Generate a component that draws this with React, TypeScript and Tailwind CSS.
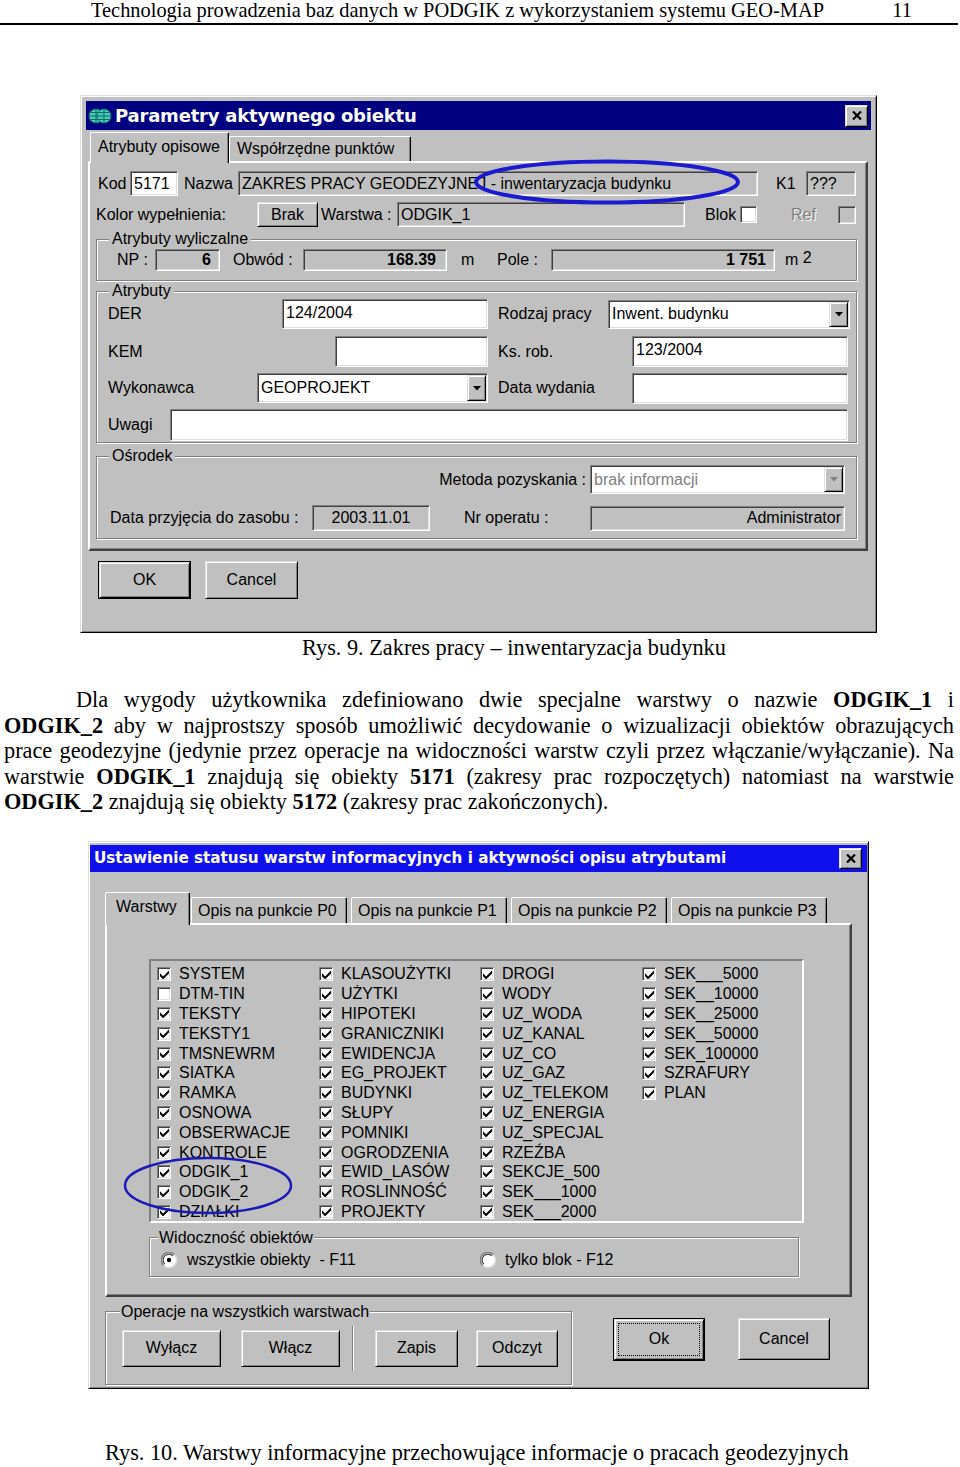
import React from "react";

const RAISED =
  "border border-t-[#dfdfdf] border-l-[#dfdfdf] border-r-black border-b-black shadow-[inset_1px_1px_0_white,inset_-1px_-1px_0_#808080]";
const SUNKEN =
  "border border-t-[#808080] border-l-[#808080] border-r-white border-b-white shadow-[inset_1px_1px_0_#404040,inset_-1px_-1px_0_#dfdfdf]";
const GROUP =
  "border border-[#808080] shadow-[inset_1px_1px_0_white,1px_1px_0_white]";

function Field({
  className = "",
  white = false,
  children,
}: {
  className?: string;
  white?: boolean;
  children?: React.ReactNode;
}) {
  return (
    <div
      className={`flex items-center px-[3px] overflow-hidden whitespace-nowrap ${SUNKEN} ${
        white ? "bg-white" : "bg-[#c0c0c0]"
      } ${className}`}
    >
      {children}
    </div>
  );
}

function Arrow({ gray = false }: { gray?: boolean }) {
  return (
    <svg width="8" height="5" viewBox="0 0 8 5">
      <path d="M0 0H8L4 4.5Z" fill={gray ? "#808080" : "black"} />
    </svg>
  );
}

function Combo({
  className = "",
  children,
  gray = false,
}: {
  className?: string;
  children?: React.ReactNode;
  gray?: boolean;
}) {
  return (
    <div className={`flex items-stretch bg-white ${SUNKEN} ${className}`}>
      <span
        className={`flex-1 flex items-center pl-[3px] whitespace-nowrap overflow-hidden ${
          gray ? "text-[#808080]" : ""
        }`}
      >
        {children}
      </span>
      <span
        className={`w-[19px] m-[1px] flex items-center justify-center bg-[#c0c0c0] ${RAISED}`}
      >
        <Arrow gray={gray} />
      </span>
    </div>
  );
}

function Btn({
  className = "",
  children,
  def = false,
  focus = false,
}: {
  className?: string;
  children?: React.ReactNode;
  def?: boolean;
  focus?: boolean;
}) {
  return (
    <div
      className={`flex bg-[#c0c0c0] ${def ? "border border-black" : ""} ${className}`}
    >
      <div
        className={`flex-1 flex items-stretch justify-center p-[3px] ${RAISED}`}
      >
        <div
          className={`flex-1 flex items-center justify-center ${
            focus ? "border border-dotted border-black" : ""
          }`}
        >
          {children}
        </div>
      </div>
    </div>
  );
}

function CheckMark() {
  return (
    <svg width="9" height="9" viewBox="0 0 7 7">
      <path d="M0 2.6L2.4 5L7 0.4V2.8L2.4 7.3L0 4.9Z" fill="black" />
    </svg>
  );
}

function CheckBox({
  checked = true,
  className = "",
  gray = false,
}: {
  checked?: boolean;
  className?: string;
  gray?: boolean;
}) {
  return (
    <span
      className={`flex items-center justify-center shrink-0 ${
        gray ? "bg-[#c0c0c0]" : "bg-white"
      } ${SUNKEN} ${className}`}
    >
      {checked && <CheckMark />}
    </span>
  );
}

function Radio({ on = false }: { on?: boolean }) {
  return (
    <svg width="16" height="16" viewBox="0 0 16 16" className="shrink-0">
      <circle cx="8" cy="8" r="7" fill="white" />
      <path d="M2.5 13.2A7 7 0 0 1 13.2 2.5" stroke="#808080" strokeWidth="1.5" fill="none" />
      <path d="M3.8 12A5.5 5.5 0 0 1 12 3.8" stroke="#404040" strokeWidth="1.2" fill="none" />
      <path d="M13.5 2.9A7 7 0 0 1 2.9 13.5" stroke="#dfdfdf" strokeWidth="1.2" fill="none" />
      {on && <circle cx="8" cy="8" r="2.2" fill="black" />}
    </svg>
  );
}

function CloseBtn({ className = "" }: { className?: string }) {
  return (
    <div
      className={`flex items-center justify-center bg-[#c0c0c0] ${RAISED} ${className}`}
    >
      <svg width="10" height="9" viewBox="0 0 10 9">
        <path d="M1 0.5L9 8.5M9 0.5L1 8.5" stroke="black" strokeWidth="2.2" />
      </svg>
    </div>
  );
}

function Globe() {
  return (
    <svg width="24" height="18" viewBox="0 0 24 18" className="shrink-0">
      <g fill="#48c8b8" stroke="#0b6f66" strokeWidth="1">
        <circle cx="8" cy="9" r="7" />
        <circle cx="16" cy="9" r="7" />
      </g>
      <path
        d="M1 9H23M8 2V16M16 2V16M2.5 5.5H21.5M2.5 12.5H21.5"
        stroke="#0b6f66"
        strokeWidth="1"
        fill="none"
      />
    </svg>
  );
}

const col1: [string, boolean][] = [
  ["SYSTEM", true],
  ["DTM-TIN", false],
  ["TEKSTY", true],
  ["TEKSTY1", true],
  ["TMSNEWRM", true],
  ["SIATKA", true],
  ["RAMKA", true],
  ["OSNOWA", true],
  ["OBSERWACJE", true],
  ["KONTROLE", true],
  ["ODGIK_1", true],
  ["ODGIK_2", true],
  ["DZIAŁKI", true],
];
const others = [
  "KLASOUŻYTKI",
  "UŻYTKI",
  "HIPOTEKI",
  "GRANICZNIKI",
  "EWIDENCJA",
  "EG_PROJEKT",
  "BUDYNKI",
  "SŁUPY",
  "POMNIKI",
  "OGRODZENIA",
  "EWID_LASÓW",
  "ROSLINNOŚĆ",
  "PROJEKTY",
  "DROGI",
  "WODY",
  "UZ_WODA",
  "UZ_KANAL",
  "UZ_CO",
  "UZ_GAZ",
  "UZ_TELEKOM",
  "UZ_ENERGIA",
  "UZ_SPECJAL",
  "RZEŹBA",
  "SEKCJE_500",
  "SEK___1000",
  "SEK___2000",
  "SEK___5000",
  "SEK__10000",
  "SEK__25000",
  "SEK__50000",
  "SEK_100000",
  "SZRAFURY",
  "PLAN",
];
const layers: [string, boolean][] = [
  ...col1,
  ...others.map((n) => [n, true] as [string, boolean]),
];

function Dialog1() {
  return (
    <div
      className={`relative ml-[80px] mt-[70px] w-[797px] h-[538px] bg-[#c0c0c0] p-[5px] ${RAISED} font-['Liberation_Sans',Arial,sans-serif] text-[16px] leading-[18px] text-black`}
    >
      {/* title bar */}
      <div className="flex items-center h-[29px] bg-[#000080] pl-[2px] pr-[3px]">
        <Globe />
        <span className="ml-[3px] font-['DejaVu_Sans',sans-serif] font-bold text-[18px] text-white tracking-[-0.2px]">
          Parametry aktywnego obiektu
        </span>
        <CloseBtn className="ml-auto w-[23px] h-[22px]" />
      </div>

      {/* tabs */}
      <div className="flex items-end h-[29px] mt-[2px] pl-[4px]">
        <div className="relative z-10 -mb-[2px] h-[31px] w-[139px] bg-[#c0c0c0] border-t border-l border-r border-t-white border-l-white border-r-black shadow-[inset_-1px_0_0_#808080] rounded-t-[2px] flex items-center pl-[7px] pb-[3px]">
          Atrybuty opisowe
        </div>
        <div className="h-[25px] w-[182px] border-t border-l border-r border-t-white border-l-white border-r-black shadow-[inset_-1px_0_0_#808080] rounded-t-[2px] flex items-center pl-[7px]">
          Współrzędne punktów
        </div>
      </div>

      {/* panel */}
      <div className="ml-[2px] w-[780px] h-[390px] border-2 border-t-white border-l-white border-r-[#404040] border-b-[#404040] shadow-[inset_-1px_-1px_0_#808080] pt-[8px]">
        {/* row 1 */}
        <div className="flex items-center h-[25px] pl-[8px]">
          <span className="w-[32px]">Kod</span>
          <Field white className="w-[48px] h-[25px]">
            5171
          </Field>
          <span className="ml-[6px] w-[54px]">Nazwa</span>
          <Field className="w-[520px] h-[25px]">
            ZAKRES PRACY GEODEZYJNEJ - inwentaryzacja budynku
          </Field>
          <span className="ml-[18px] w-[30px]">K1</span>
          <Field className="w-[50px] h-[25px]">???</Field>
        </div>
        {/* row 2 */}
        <div className="flex items-center h-[25px] mt-[6px] pl-[6px]">
          <span className="w-[161px]">Kolor wypełnienia:</span>
          <Btn className="w-[61px] h-[25px]">Brak</Btn>
          <span className="ml-[3px] w-[76px]">Warstwa :</span>
          <Field className="w-[288px] h-[25px]">ODGIK_1</Field>
          <span className="ml-[20px] w-[35px]">Blok</span>
          <CheckBox checked={false} className="w-[17px] h-[17px]" />
          <span className="ml-[34px] w-[47px] text-[#808080] [text-shadow:1px_1px_0_white]">
            Ref
          </span>
          <CheckBox checked={false} gray className="w-[18px] h-[18px]" />
        </div>

        {/* Atrybuty wyliczalne */}
        <fieldset className={`ml-[6px] mt-[4px] w-[761px] pb-[9px] ${GROUP}`}>
          <legend className="ml-[12px] px-[3px] leading-[16px] bg-[#c0c0c0]">
            Atrybuty wyliczalne
          </legend>
          <div className="flex items-center h-[22px] mt-[2px] pl-[20px]">
            <span className="w-[38px]">NP :</span>
            <Field className="w-[65px] h-[22px] justify-end font-bold pr-[8px]">
              6
            </Field>
            <span className="ml-[13px] w-[70px]">Obwód :</span>
            <Field className="w-[144px] h-[22px] justify-end font-bold pr-[10px]">
              168.39
            </Field>
            <span className="ml-[14px] w-[36px]">m</span>
            <span className="w-[54px]">Pole :</span>
            <Field className="w-[224px] h-[22px] justify-end font-bold pr-[8px]">
              1 751
            </Field>
            <span className="ml-[10px]">
              m <sup className="text-[16px] relative -top-[2px]">2</sup>
            </span>
          </div>
        </fieldset>

        {/* Atrybuty */}
        <fieldset className={`ml-[6px] mt-[2px] w-[761px] pb-[1px] ${GROUP}`}>
          <legend className="ml-[12px] px-[3px] leading-[16px] bg-[#c0c0c0]">
            Atrybuty
          </legend>
          <div className="flex items-center h-[30px] pl-[11px]">
            <span className="w-[174px]">DER</span>
            <Field white className="w-[206px] h-[30px] items-start pt-[4px]">
              124/2004
            </Field>
            <span className="ml-[10px] w-[110px]">Rodzaj pracy</span>
            <Combo className="w-[242px] h-[29px]">Inwent. budynku</Combo>
          </div>
          <div className="flex items-center h-[31px] mt-[7px] pl-[11px]">
            <span className="w-[227px]">KEM</span>
            <Field white className="w-[153px] h-[31px]" />
            <span className="ml-[10px] w-[134px]">Ks. rob.</span>
            <Field white className="w-[216px] h-[31px] items-start pt-[4px]">
              123/2004
            </Field>
          </div>
          <div className="flex items-center h-[30px] mt-[6px] pl-[11px]">
            <span className="w-[149px]">Wykonawca</span>
            <Combo className="w-[231px] h-[30px]">GEOPROJEKT</Combo>
            <span className="ml-[10px] w-[134px]">Data wydania</span>
            <Field white className="w-[216px] h-[31px]" />
          </div>
          <div className="flex items-center h-[32px] mt-[6px] pl-[11px]">
            <span className="w-[62px]">Uwagi</span>
            <Field white className="w-[678px] h-[32px]" />
          </div>
        </fieldset>

        {/* Osrodek */}
        <fieldset className={`ml-[6px] mt-[5px] w-[761px] pb-[6px] ${GROUP}`}>
          <legend className="ml-[12px] px-[3px] leading-[16px] bg-[#c0c0c0]">
            Ośrodek
          </legend>
          <div className="flex items-center justify-end h-[29px] mt-[1px] pr-[11px]">
            <span className="mr-[4px]">Metoda pozyskania :</span>
            <Combo gray className="w-[255px] h-[29px]">
              brak informacji
            </Combo>
          </div>
          <div className="flex items-center h-[28px] mt-[10px] pl-[13px]">
            <span className="w-[202px]">Data przyjęcia do zasobu :</span>
            <Field className="w-[118px] h-[26px] justify-center">2003.11.01</Field>
            <span className="ml-[34px] w-[126px]">Nr operatu :</span>
            <Field className="w-[255px] h-[25px] justify-end">Administrator</Field>
          </div>
        </fieldset>
      </div>

      {/* buttons */}
      <div className="flex mt-[10px] pl-[12px] gap-[14px]">
        <Btn def className="w-[93px] h-[38px]">
          OK
        </Btn>
        <Btn className="w-[93px] h-[38px]">Cancel</Btn>
      </div>

      {/* annotation ellipse */}
      <svg
        className="absolute left-[392px] top-[63px] pointer-events-none"
        width="268"
        height="46"
        viewBox="0 0 268 46"
      >
        <ellipse
          cx="134"
          cy="23"
          rx="131"
          ry="20.5"
          fill="none"
          stroke="#1a1ad0"
          strokeWidth="4"
        />
      </svg>
    </div>
  );
}

function Dialog2() {
  return (
    <div
      className={`relative ml-[88px] mt-[26px] w-[781px] h-[548px] bg-[#c0c0c0] pt-[3px] px-[1px] ${RAISED} font-['Liberation_Sans',Arial,sans-serif] text-[16px] leading-[18px] text-black`}
    >
      <div className="flex items-center h-[27px] bg-[#1010ee] pl-[4px] pr-[5px]">
        <span className="font-['DejaVu_Sans',sans-serif] font-bold text-[15.2px] text-white">
          Ustawienie statusu warstw informacyjnych i aktywności opisu atrybutami
        </span>
        <CloseBtn className="ml-auto w-[23px] h-[21px]" />
      </div>

      {/* tabs */}
      <div className="flex items-end h-[31px] mt-[20px] ml-[15px]">
        <div className="relative z-10 -mb-[2px] h-[33px] w-[85px] bg-[#c0c0c0] border-t border-l border-r border-t-white border-l-white border-r-black shadow-[inset_-1px_0_0_#808080] rounded-t-[2px] flex items-center pl-[10px] pb-[3px]">
          Warstwy
        </div>
        {["P0", "P1", "P2", "P3"].map((p, i) => (
          <div
            key={p}
            className={`h-[26px] w-[156px] border-t border-l border-r border-t-white border-l-white border-r-black shadow-[inset_-1px_0_0_#808080] rounded-t-[2px] flex items-center pl-[6px] pt-[2px] ${
              i === 0 ? "ml-[1px]" : "ml-[4px]"
            }`}
          >
            Opis na punkcie {p}
          </div>
        ))}
      </div>

      {/* panel */}
      <div className="ml-[15px] w-[747px] h-[374px] border-2 border-t-white border-l-white border-r-[#404040] border-b-[#404040] shadow-[inset_-1px_-1px_0_#808080] pt-[34px]">
        <div
          className={`ml-[42px] w-[655px] h-[264px] border-2 border-t-[#808080] border-l-[#808080] border-r-white border-b-white pl-[6px] pt-[4px]`}
        >
          <div className="grid grid-flow-col grid-rows-[repeat(13,19.8px)] grid-cols-[162px_161px_162px_160px] leading-[18px]">
            {layers.map(([name, on]) => (
              <div key={name} className="flex items-center">
                <CheckBox checked={on} className="w-[14px] h-[14px]" />
                <span className="ml-[8px] whitespace-nowrap">{name}</span>
              </div>
            ))}
          </div>
        </div>

        <fieldset className={`ml-[42px] mt-[7px] w-[650px] pb-[2px] ${GROUP}`}>
          <legend className="ml-[8px] px-[1px] leading-[16px] bg-[#c0c0c0]">
            Widoczność obiektów
          </legend>
          <div className="flex items-center h-[28px] pl-[11px]">
            <div className="w-[319px] flex items-center">
              <Radio on />
              <span className="ml-[10px]">wszystkie obiekty&nbsp; - F11</span>
            </div>
            <div className="flex items-center">
              <Radio />
              <span className="ml-[9px]">tylko blok - F12</span>
            </div>
          </div>
        </fieldset>
      </div>

      {/* bottom area */}
      <div className="flex items-start ml-[15px] mt-[7px]">
        <fieldset className={`w-[467px] ${GROUP}`}>
          <legend className="ml-[14px] px-[1px] leading-[16px] bg-[#c0c0c0]">
            Operacje na wszystkich warstwach
          </legend>
          <div className="flex items-center pt-[6px] pb-[13px] pl-[16px]">
            <Btn className="w-[99px] h-[37px]">Wyłącz</Btn>
            <Btn className="ml-[20px] w-[99px] h-[37px]">Włącz</Btn>
            <div className="ml-[12px] w-[2px] h-[45px] border-l border-r border-l-[#808080] border-r-white" />
            <Btn className="ml-[21px] w-[83px] h-[37px]">Zapis</Btn>
            <Btn className="ml-[18px] w-[82px] h-[37px]">Odczyt</Btn>
          </div>
        </fieldset>
        <Btn def focus className="ml-[41px] mt-[14px] w-[92px] h-[43px]">
          Ok
        </Btn>
        <Btn className="ml-[33px] mt-[14px] w-[92px] h-[42px]">Cancel</Btn>
      </div>

      <svg
        className="absolute left-[34px] top-[314px] pointer-events-none"
        width="170"
        height="59"
        viewBox="0 0 170 59"
      >
        <ellipse
          cx="85"
          cy="29.5"
          rx="83"
          ry="27.5"
          fill="none"
          stroke="#1a1ab8"
          strokeWidth="2.5"
        />
      </svg>
    </div>
  );
}

export default function App() {
  const line = "text-justify [text-align-last:justify] whitespace-nowrap";
  return (
    <div className="w-[960px] min-h-[1467px] bg-white font-['Liberation_Serif','Times_New_Roman',serif] text-black">
      {/* header */}
      <div className="w-[958px] h-[25px] border-b-2 border-black flex items-end pb-[2px] text-[20.4px] leading-[22px]">
        <span className="ml-[91px]">
          Technologia prowadzenia baz danych w PODGIK z wykorzystaniem systemu GEO-MAP
        </span>
        <span className="ml-auto mr-[46px]">11</span>
      </div>

      <Dialog1 />

      <div className="mt-[3px] pl-[302px] text-[22.3px] leading-[24px]">
        Rys. 9. Zakres pracy – inwentaryzacja budynku
      </div>

      {/* paragraph */}
      <div className="mt-[27px] ml-[4px] w-[950px] text-[22.3px] leading-[25.5px]">
        <div className={`${line} pl-[72px]`}>
          Dla wygody użytkownika zdefiniowano dwie specjalne warstwy o nazwie{" "}
          <b>ODGIK_1</b> i
        </div>
        <div className={line}>
          <b>ODGIK_2</b> aby w najprostszy sposób umożliwić decydowanie o
          wizualizacji obiektów obrazujących
        </div>
        <div className={line}>
          prace geodezyjne (jedynie przez operacje na widoczności warstw czyli
          przez włączanie/wyłączanie). Na
        </div>
        <div className={line}>
          warstwie <b>ODGIK_1</b> znajdują się obiekty <b>5171</b> (zakresy prac
          rozpoczętych) natomiast na warstwie
        </div>
        <div className="whitespace-nowrap">
          <b>ODGIK_2</b> znajdują się obiekty <b>5172</b> (zakresy prac
          zakończonych).
        </div>
      </div>

      <Dialog2 />

      <div className="mt-[52px] pl-[105px] text-[22.3px] leading-[24px]">
        Rys. 10. Warstwy informacyjne przechowujące informacje o pracach
        geodezyjnych
      </div>
    </div>
  );
}
